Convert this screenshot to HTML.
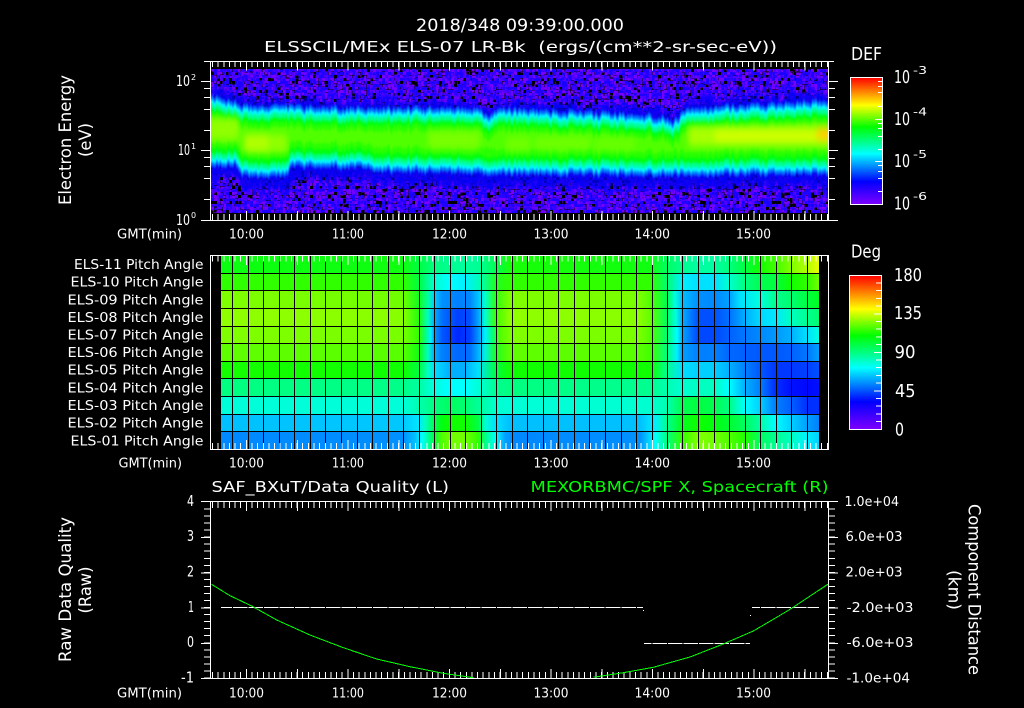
<!DOCTYPE html>
<html lang="en"><head><meta charset="utf-8"><title>ELS plot</title>
<style>
html,body{margin:0;padding:0;background:#000;width:1024px;height:708px;overflow:hidden}
svg{display:block}
text{font-family:"DejaVu Sans","Liberation Sans",sans-serif;font-size:13.5px;fill:#fff;white-space:pre}
.t{font-size:16.5px}.m{font-size:15.5px}.b{font-size:18px}.sm{font-size:8px}.su{font-size:11px}.d{font-size:15px}
.k{stroke:#fff;fill:none;shape-rendering:crispEdges}
</style></head><body>
<svg xmlns="http://www.w3.org/2000/svg" width="1024" height="708" viewBox="0 0 1024 708">
<defs>
<clipPath id="c1"><rect x="211" y="69" width="617" height="145"/></clipPath>
<filter id="spT" filterUnits="userSpaceOnUse" x="211" y="69" width="618" height="145" color-interpolation-filters="sRGB">
<feTurbulence type="fractalNoise" baseFrequency=".83" numOctaves="2" seed="3" result="n"/>
<feFlood x="212" y="70" width="1" height="1" flood-color="#fff"/><feComposite width="3" height="3"/><feTile result="a"/>
<feComposite in="n" in2="a" operator="in"/><feMorphology operator="dilate" radius="1"/>
<feColorMatrix values="3 0 0 0 -1 3 0 0 0 -1 3 0 0 0 -1 0 0 0 0 1"/>
<feComponentTransfer><feFuncR type="discrete" tableValues="0 0 0 0 0 0 0 .46 .46 .46 .46 .46 .46 .3 .3 .3 .3 .2 .2 .2"/><feFuncG type="discrete" tableValues="0"/><feFuncB type="discrete" tableValues="0 0 0 0 0 0 0 1 1 1 1 1 1 1 1 1 1 1 1 1"/></feComponentTransfer>
</filter>
<filter id="spB" filterUnits="userSpaceOnUse" x="211" y="69" width="618" height="145" color-interpolation-filters="sRGB">
<feTurbulence type="fractalNoise" baseFrequency=".79" numOctaves="2" seed="11" result="n"/>
<feFlood x="212" y="70" width="1" height="1" flood-color="#fff"/><feComposite width="3" height="3"/><feTile result="a"/>
<feComposite in="n" in2="a" operator="in"/><feMorphology operator="dilate" radius="1"/>
<feColorMatrix values="3 0 0 0 -1 3 0 0 0 -1 3 0 0 0 -1 0 0 0 0 1"/>
<feComponentTransfer><feFuncR type="discrete" tableValues="0 0 0 0 0 .46 .46 .46 .46 .46 .3 .3 .3 .2 .2 .1 .1 .1 .1 .1"/><feFuncG type="discrete" tableValues="0"/><feFuncB type="discrete" tableValues="0 0 0 0 0 1 1 1 1 1 1 1 1 1 1 1 1 1 1 1"/></feComponentTransfer>
</filter>
<filter id="band" filterUnits="userSpaceOnUse" x="190" y="60" width="660" height="160" color-interpolation-filters="sRGB">
<feTurbulence type="fractalNoise" baseFrequency=".45 .004" numOctaves="1" seed="5"/>
<feColorMatrix result="d" values="2 0 0 0 -.5 0 0 0 0 .5 0 0 0 0 0 0 0 0 0 1"/>
<feDisplacementMap in="SourceGraphic" in2="d" scale="6" xChannelSelector="G" yChannelSelector="R"/>
<feGaussianBlur stdDeviation=".5 1.4"/>
</filter>
<filter id="soft" filterUnits="userSpaceOnUse" x="190" y="60" width="660" height="160" color-interpolation-filters="sRGB">
<feTurbulence type="fractalNoise" baseFrequency=".45 .004" numOctaves="1" seed="8"/>
<feColorMatrix result="d" values="2 0 0 0 -.5 0 0 0 0 .5 0 0 0 0 0 0 0 0 0 1"/>
<feDisplacementMap in="SourceGraphic" in2="d" scale="12" xChannelSelector="G" yChannelSelector="R"/>
<feGaussianBlur stdDeviation=".7 2.5"/>
</filter>
<filter id="core" filterUnits="userSpaceOnUse" x="190" y="60" width="660" height="160" color-interpolation-filters="sRGB">
<feGaussianBlur stdDeviation="3 4"/>
</filter>
<linearGradient id="cb" x1="0" y1="0" x2="0" y2="1">
<stop offset="0" stop-color="#ff0000"/><stop offset=".218" stop-color="#ffff00"/><stop offset=".39" stop-color="#00ff00"/><stop offset=".5" stop-color="#00ff80"/><stop offset=".6" stop-color="#00ffff"/><stop offset=".71" stop-color="#0080ff"/><stop offset=".82" stop-color="#0000ff"/><stop offset="1" stop-color="#7f00ff"/>
</linearGradient>
<linearGradient id="r11" gradientUnits="userSpaceOnUse" x1="0" y1="0" x2="1000" y2="0">
<stop offset=".221" stop-color="#0cff10"/><stop offset=".403" stop-color="#10ff10"/><stop offset=".419" stop-color="#00ff40"/><stop offset=".434" stop-color="#00ff80"/><stop offset=".450" stop-color="#00ff90"/><stop offset=".465" stop-color="#00ffa0"/><stop offset=".481" stop-color="#00ff90"/><stop offset=".496" stop-color="#00ff50"/><stop offset=".510" stop-color="#18ff08"/><stop offset=".651" stop-color="#10ff10"/><stop offset=".667" stop-color="#00ff60"/><stop offset=".682" stop-color="#00ff90"/><stop offset=".698" stop-color="#00ffa0"/><stop offset=".714" stop-color="#00ffa0"/><stop offset=".729" stop-color="#00ff80"/><stop offset=".745" stop-color="#00ff40"/><stop offset=".760" stop-color="#10ff00"/><stop offset=".775" stop-color="#40ff00"/><stop offset=".791" stop-color="#80ff00"/><stop offset=".807" stop-color="#b0ff00"/><stop offset=".819" stop-color="#e8ff00"/>
</linearGradient>
<linearGradient id="r10" gradientUnits="userSpaceOnUse" x1="0" y1="0" x2="1000" y2="0">
<stop offset=".221" stop-color="#30ff00"/><stop offset=".403" stop-color="#30ff00"/><stop offset=".419" stop-color="#00ff40"/><stop offset=".434" stop-color="#00ffd0"/><stop offset=".450" stop-color="#00ffff"/><stop offset=".465" stop-color="#00f0ff"/><stop offset=".481" stop-color="#00ffb0"/><stop offset=".496" stop-color="#20ff20"/><stop offset=".510" stop-color="#30ff00"/><stop offset=".651" stop-color="#30ff00"/><stop offset=".667" stop-color="#00ff70"/><stop offset=".682" stop-color="#00f0ff"/><stop offset=".698" stop-color="#00e0ff"/><stop offset=".714" stop-color="#00e0ff"/><stop offset=".729" stop-color="#00ffd0"/><stop offset=".745" stop-color="#00ff80"/><stop offset=".760" stop-color="#00ff50"/><stop offset=".775" stop-color="#00ff40"/><stop offset=".791" stop-color="#10ff00"/><stop offset=".807" stop-color="#30ff00"/><stop offset=".819" stop-color="#70ff00"/>
</linearGradient>
<linearGradient id="r9" gradientUnits="userSpaceOnUse" x1="0" y1="0" x2="1000" y2="0">
<stop offset=".221" stop-color="#80ff00"/><stop offset=".403" stop-color="#70ff00"/><stop offset=".419" stop-color="#10ff20"/><stop offset=".428" stop-color="#00ffa0"/><stop offset=".434" stop-color="#00d0ff"/><stop offset=".442" stop-color="#0090ff"/><stop offset=".458" stop-color="#0080ff"/><stop offset=".470" stop-color="#0088ff"/><stop offset=".478" stop-color="#00c0ff"/><stop offset=".485" stop-color="#00ffd0"/><stop offset=".496" stop-color="#30ff10"/><stop offset=".510" stop-color="#80ff00"/><stop offset=".640" stop-color="#78ff00"/><stop offset=".651" stop-color="#50ff00"/><stop offset=".667" stop-color="#00ff50"/><stop offset=".675" stop-color="#00ffe0"/><stop offset=".682" stop-color="#00c0ff"/><stop offset=".698" stop-color="#0090ff"/><stop offset=".714" stop-color="#0088ff"/><stop offset=".729" stop-color="#00a0ff"/><stop offset=".740" stop-color="#00e0ff"/><stop offset=".760" stop-color="#00ffe0"/><stop offset=".775" stop-color="#00ff90"/><stop offset=".791" stop-color="#00ff70"/><stop offset=".807" stop-color="#00ff40"/><stop offset=".819" stop-color="#00ff20"/>
</linearGradient>
<linearGradient id="r8" gradientUnits="userSpaceOnUse" x1="0" y1="0" x2="1000" y2="0">
<stop offset=".221" stop-color="#90ff00"/><stop offset=".403" stop-color="#88ff00"/><stop offset=".419" stop-color="#20ff10"/><stop offset=".428" stop-color="#00ffc0"/><stop offset=".434" stop-color="#00b0ff"/><stop offset=".442" stop-color="#0070ff"/><stop offset=".458" stop-color="#0040ff"/><stop offset=".470" stop-color="#0050ff"/><stop offset=".478" stop-color="#00a0ff"/><stop offset=".485" stop-color="#00ffd0"/><stop offset=".496" stop-color="#40ff00"/><stop offset=".510" stop-color="#90ff00"/><stop offset=".640" stop-color="#88ff00"/><stop offset=".651" stop-color="#60ff00"/><stop offset=".667" stop-color="#00ff60"/><stop offset=".676" stop-color="#00ffe0"/><stop offset=".682" stop-color="#00b0ff"/><stop offset=".698" stop-color="#0050ff"/><stop offset=".714" stop-color="#0050ff"/><stop offset=".729" stop-color="#0070ff"/><stop offset=".745" stop-color="#00b0ff"/><stop offset=".760" stop-color="#00d8ff"/><stop offset=".775" stop-color="#00e8ff"/><stop offset=".791" stop-color="#00ffc0"/><stop offset=".807" stop-color="#00ff90"/><stop offset=".819" stop-color="#00ff70"/>
</linearGradient>
<linearGradient id="r7" gradientUnits="userSpaceOnUse" x1="0" y1="0" x2="1000" y2="0">
<stop offset=".221" stop-color="#80ff00"/><stop offset=".403" stop-color="#78ff00"/><stop offset=".419" stop-color="#30ff00"/><stop offset=".426" stop-color="#00ff90"/><stop offset=".431" stop-color="#00f0ff"/><stop offset=".434" stop-color="#00a0ff"/><stop offset=".442" stop-color="#0058ff"/><stop offset=".458" stop-color="#0028ff"/><stop offset=".470" stop-color="#0040ff"/><stop offset=".478" stop-color="#0090ff"/><stop offset=".485" stop-color="#00f0ff"/><stop offset=".492" stop-color="#00ff80"/><stop offset=".500" stop-color="#50ff00"/><stop offset=".512" stop-color="#80ff00"/><stop offset=".640" stop-color="#78ff00"/><stop offset=".651" stop-color="#50ff00"/><stop offset=".667" stop-color="#00ff70"/><stop offset=".677" stop-color="#00ffff"/><stop offset=".683" stop-color="#00a0ff"/><stop offset=".698" stop-color="#0048ff"/><stop offset=".714" stop-color="#0048ff"/><stop offset=".729" stop-color="#0060ff"/><stop offset=".745" stop-color="#0078ff"/><stop offset=".760" stop-color="#0088ff"/><stop offset=".775" stop-color="#0098ff"/><stop offset=".791" stop-color="#00b0ff"/><stop offset=".807" stop-color="#00e0ff"/><stop offset=".819" stop-color="#00ffe0"/>
</linearGradient>
<linearGradient id="r6" gradientUnits="userSpaceOnUse" x1="0" y1="0" x2="1000" y2="0">
<stop offset=".221" stop-color="#60ff00"/><stop offset=".403" stop-color="#58ff00"/><stop offset=".419" stop-color="#10ff10"/><stop offset=".428" stop-color="#00ffc0"/><stop offset=".434" stop-color="#00b0ff"/><stop offset=".442" stop-color="#0080ff"/><stop offset=".458" stop-color="#0068ff"/><stop offset=".470" stop-color="#0070ff"/><stop offset=".478" stop-color="#00b0ff"/><stop offset=".485" stop-color="#00f0e0"/><stop offset=".496" stop-color="#20ff20"/><stop offset=".510" stop-color="#60ff00"/><stop offset=".640" stop-color="#58ff00"/><stop offset=".651" stop-color="#40ff00"/><stop offset=".667" stop-color="#00ff80"/><stop offset=".677" stop-color="#00f0ff"/><stop offset=".682" stop-color="#00a0ff"/><stop offset=".698" stop-color="#0080ff"/><stop offset=".714" stop-color="#0080ff"/><stop offset=".729" stop-color="#0068ff"/><stop offset=".745" stop-color="#0060ff"/><stop offset=".760" stop-color="#0058ff"/><stop offset=".775" stop-color="#0058ff"/><stop offset=".791" stop-color="#0060ff"/><stop offset=".807" stop-color="#0078ff"/><stop offset=".819" stop-color="#00a0ff"/>
</linearGradient>
<linearGradient id="r5" gradientUnits="userSpaceOnUse" x1="0" y1="0" x2="1000" y2="0">
<stop offset=".221" stop-color="#14ff00"/><stop offset=".403" stop-color="#10ff00"/><stop offset=".419" stop-color="#00ff40"/><stop offset=".428" stop-color="#00ffc0"/><stop offset=".434" stop-color="#00e0ff"/><stop offset=".450" stop-color="#00b0ff"/><stop offset=".465" stop-color="#00b0ff"/><stop offset=".478" stop-color="#00e0ff"/><stop offset=".496" stop-color="#00ff40"/><stop offset=".510" stop-color="#10ff00"/><stop offset=".651" stop-color="#10ff00"/><stop offset=".667" stop-color="#00ff90"/><stop offset=".682" stop-color="#00e0ff"/><stop offset=".698" stop-color="#00d0ff"/><stop offset=".714" stop-color="#00d0ff"/><stop offset=".729" stop-color="#00b0ff"/><stop offset=".745" stop-color="#0080ff"/><stop offset=".760" stop-color="#0058ff"/><stop offset=".775" stop-color="#0038ff"/><stop offset=".791" stop-color="#0038ff"/><stop offset=".807" stop-color="#0040ff"/><stop offset=".819" stop-color="#0050ff"/>
</linearGradient>
<linearGradient id="r4" gradientUnits="userSpaceOnUse" x1="0" y1="0" x2="1000" y2="0">
<stop offset=".221" stop-color="#00ff80"/><stop offset=".403" stop-color="#00ff88"/><stop offset=".419" stop-color="#00ffa0"/><stop offset=".434" stop-color="#00ffe0"/><stop offset=".450" stop-color="#00ffff"/><stop offset=".465" stop-color="#00ffff"/><stop offset=".481" stop-color="#00ffd0"/><stop offset=".496" stop-color="#00ff90"/><stop offset=".510" stop-color="#00ff80"/><stop offset=".651" stop-color="#00ff90"/><stop offset=".667" stop-color="#00ffb0"/><stop offset=".682" stop-color="#00ffd0"/><stop offset=".698" stop-color="#00ffc0"/><stop offset=".714" stop-color="#00ffc0"/><stop offset=".729" stop-color="#00ffff"/><stop offset=".745" stop-color="#00b0ff"/><stop offset=".760" stop-color="#0080ff"/><stop offset=".775" stop-color="#0030ff"/><stop offset=".791" stop-color="#0010ff"/><stop offset=".807" stop-color="#0008ff"/><stop offset=".819" stop-color="#0010ff"/>
</linearGradient>
<linearGradient id="r3" gradientUnits="userSpaceOnUse" x1="0" y1="0" x2="1000" y2="0">
<stop offset=".221" stop-color="#00ffd8"/><stop offset=".403" stop-color="#00ffd8"/><stop offset=".419" stop-color="#00ffb0"/><stop offset=".434" stop-color="#00ff80"/><stop offset=".450" stop-color="#00ff60"/><stop offset=".465" stop-color="#00ff70"/><stop offset=".481" stop-color="#00ffa0"/><stop offset=".496" stop-color="#00ffd0"/><stop offset=".510" stop-color="#00ffd8"/><stop offset=".651" stop-color="#00ffd0"/><stop offset=".667" stop-color="#00ffb0"/><stop offset=".682" stop-color="#00ff50"/><stop offset=".698" stop-color="#00ff40"/><stop offset=".714" stop-color="#00ff50"/><stop offset=".729" stop-color="#00ff80"/><stop offset=".745" stop-color="#00ffff"/><stop offset=".760" stop-color="#00d0ff"/><stop offset=".775" stop-color="#0080ff"/><stop offset=".791" stop-color="#0060ff"/><stop offset=".807" stop-color="#0030ff"/><stop offset=".819" stop-color="#0030ff"/>
</linearGradient>
<linearGradient id="r2" gradientUnits="userSpaceOnUse" x1="0" y1="0" x2="1000" y2="0">
<stop offset=".221" stop-color="#00c0ff"/><stop offset=".403" stop-color="#00c8ff"/><stop offset=".419" stop-color="#00e8ff"/><stop offset=".425" stop-color="#00ffc0"/><stop offset=".434" stop-color="#00ff50"/><stop offset=".442" stop-color="#00ff10"/><stop offset=".450" stop-color="#10ff00"/><stop offset=".465" stop-color="#10ff00"/><stop offset=".478" stop-color="#00ff40"/><stop offset=".485" stop-color="#00ffd0"/><stop offset=".496" stop-color="#00e0ff"/><stop offset=".510" stop-color="#00c0ff"/><stop offset=".640" stop-color="#00c0ff"/><stop offset=".655" stop-color="#00f0ff"/><stop offset=".667" stop-color="#00ff90"/><stop offset=".682" stop-color="#00ff20"/><stop offset=".698" stop-color="#10ff00"/><stop offset=".714" stop-color="#00ff10"/><stop offset=".729" stop-color="#00ff30"/><stop offset=".745" stop-color="#00ff60"/><stop offset=".760" stop-color="#00ffa0"/><stop offset=".775" stop-color="#00ffff"/><stop offset=".791" stop-color="#00d0ff"/><stop offset=".807" stop-color="#00a0ff"/><stop offset=".819" stop-color="#0080ff"/>
</linearGradient>
<linearGradient id="r1" gradientUnits="userSpaceOnUse" x1="0" y1="0" x2="1000" y2="0">
<stop offset=".221" stop-color="#0088ff"/><stop offset=".403" stop-color="#0090ff"/><stop offset=".415" stop-color="#00c0ff"/><stop offset=".422" stop-color="#00ffff"/><stop offset=".430" stop-color="#00ff80"/><stop offset=".434" stop-color="#00ff40"/><stop offset=".442" stop-color="#50ff00"/><stop offset=".450" stop-color="#70ff00"/><stop offset=".465" stop-color="#70ff00"/><stop offset=".478" stop-color="#30ff00"/><stop offset=".485" stop-color="#00ff80"/><stop offset=".496" stop-color="#00ffff"/><stop offset=".505" stop-color="#00a0ff"/><stop offset=".515" stop-color="#0088ff"/><stop offset=".640" stop-color="#0090ff"/><stop offset=".655" stop-color="#00ffff"/><stop offset=".667" stop-color="#00ff80"/><stop offset=".682" stop-color="#30ff00"/><stop offset=".698" stop-color="#80ff00"/><stop offset=".714" stop-color="#70ff00"/><stop offset=".729" stop-color="#50ff00"/><stop offset=".745" stop-color="#20ff00"/><stop offset=".760" stop-color="#00ff60"/><stop offset=".775" stop-color="#00ff90"/><stop offset=".791" stop-color="#00ffc0"/><stop offset=".807" stop-color="#00f0ff"/><stop offset=".819" stop-color="#00d0ff"/>
</linearGradient>
</defs>

<rect width="1024" height="708" fill="#000"/>

<!-- titles -->
<text class="t" x="416" y="31" textLength="208" lengthAdjust="spacingAndGlyphs">2018/348 09:39:00.000</text>
<text class="m" x="264" y="52" textLength="513" lengthAdjust="spacingAndGlyphs">ELSSCIL/MEx ELS-07 LR-Bk  (ergs/(cm**2-sr-sec-eV))</text>

<!-- panel 1 heatmap -->
<g clip-path="url(#c1)">
<rect x="211" y="69" width="617" height="70" fill="#000" filter="url(#spT)"/>
<rect x="211" y="139" width="617" height="75" fill="#000" filter="url(#spB)"/>
<g filter="url(#soft)" opacity=".82">
<polygon fill="#0000f0" points="200,85 236,96 243,99 286,99 292,100 368,101 374,101 478,102 488,108 498,102 640,108 668,111 673,116 686,101 760,98 840,93 840,187 760,187 686,188 673,188 668,188 640,188 498,187 488,187 478,186 374,184 368,180 292,180 286,190 243,189 236,179 200,179"/>
</g>
<g filter="url(#band)">
<polygon fill="#0070ff" points="200,92 236,103 243,106 286,106 292,107 368,108 374,108 478,109 488,115 498,109 640,115 668,118 673,123 686,108 760,105 840,100 840,174 760,174 686,175 673,175 668,175 640,175 498,174 488,174 478,173 374,171 368,167 292,167 286,177 243,176 236,166 200,166"/>
<polygon fill="#00f8ff" points="200,96 236,107 243,110 286,110 292,111 368,112 374,112 478,113 488,119 498,113 640,119 668,122 673,127 686,112 760,109 840,104 840,170 760,170 686,171 673,171 668,171 640,171 498,170 488,170 478,169 374,167 368,163 292,163 286,173 243,172 236,162 200,162"/>
<polygon fill="#00ff90" points="200,100 236,111 243,114 286,114 292,115 368,116 374,116 478,117 488,123 498,117 640,123 668,126 673,131 686,116 760,113 840,108 840,166 760,166 686,167 673,167 668,167 640,167 498,166 488,166 478,165 374,163 368,159 292,159 286,169 243,168 236,158 200,158"/>
<polygon fill="#00ff10" points="200,105 236,116 243,119 286,119 292,120 368,121 374,121 478,122 488,128 498,122 640,128 668,131 673,136 686,121 760,118 840,113 840,161 760,161 686,162 673,162 668,162 640,162 498,161 488,161 478,160 374,158 368,154 292,154 286,164 243,163 236,153 200,153"/>
<polygon fill="#28ff00" points="200,109 236,120 243,123 286,123 292,124 368,125 374,125 478,126 488,132 498,126 640,132 668,135 673,140 686,125 760,122 840,117 840,156 760,156 686,157 673,157 668,157 640,157 498,156 488,156 478,155 374,153 368,149 292,149 286,159 243,158 236,148 200,148"/>
<polygon fill="#50ff00" points="200,114 236,125 243,128 286,128 292,129 368,130 374,131 478,131 488,139 498,131 640,137 668,140 673,147 686,130 760,127 840,122 840,150 760,150 686,151 673,150 668,151 640,151 498,150 488,146 478,149 374,147 368,143 292,143 286,153 243,152 236,142 200,142"/>
</g>
<g filter="url(#core)">
<rect x="195" y="118" width="44" height="22" fill="#90ff00"/>
<rect x="244" y="134" width="24" height="18" fill="#b0ff00"/>
<rect x="268" y="134" width="19" height="18" fill="#90ff00"/>
<rect x="428" y="131" width="52" height="18" fill="#78ff00"/>
<rect x="506" y="137" width="24" height="14" fill="#70ff00"/>
<rect x="535" y="137" width="55" height="12" fill="#70ff00"/>
<rect x="595" y="138" width="40" height="12" fill="#68ff00"/>
<rect x="688" y="126" width="160" height="20" fill="#a8ff00"/>
<rect x="715" y="130" width="130" height="12" fill="#d0ff00"/>
<rect x="817" y="128" width="20" height="12" fill="#ffd000"/>
</g>
</g>

<!-- panel 2 heatmap -->
<rect x="221" y="256" width="598" height="18" fill="url(#r11)"/>
<rect x="221" y="273" width="598" height="18" fill="url(#r10)"/>
<rect x="221" y="290" width="598" height="19" fill="url(#r9)"/>
<rect x="221" y="308" width="598" height="19" fill="url(#r8)"/>
<rect x="221" y="326" width="598" height="18" fill="url(#r7)"/>
<rect x="221" y="343" width="598" height="19" fill="url(#r6)"/>
<rect x="221" y="361" width="598" height="18" fill="url(#r5)"/>
<rect x="221" y="378" width="598" height="19" fill="url(#r4)"/>
<rect x="221" y="396" width="598" height="19" fill="url(#r3)"/>
<rect x="221" y="414" width="598" height="18" fill="url(#r2)"/>
<rect x="221" y="431" width="598" height="18" fill="url(#r1)"/>
<path shape-rendering="crispEdges" stroke="#000" fill="none" d="M221 273.5H819M221 290.5H819M221 308.5H819M221 326.5H819M221 343.5H819M221 361.5H819M221 378.5H819M221 396.5H819M221 414.5H819M221 431.5H819M232.5 256V449M248.5 256V449M263.5 256V449M279.5 256V449M294.5 256V449M310.5 256V449M325.5 256V449M341.5 256V449M357.5 256V449M372.5 256V449M388.5 256V449M403.5 256V449M419.5 256V449M434.5 256V449M450.5 256V449M465.5 256V449M481.5 256V449M496.5 256V449M512.5 256V449M527.5 256V449M543.5 256V449M558.5 256V449M574.5 256V449M589.5 256V449M605.5 256V449M621.5 256V449M636.5 256V449M652.5 256V449M667.5 256V449M682.5 256V449M698.5 256V449M714.5 256V449M729.5 256V449M745.5 256V449M760.5 256V449M776.5 256V449M791.5 256V449M807.5 256V449"/>

<!-- panel 1 axes -->
<g class="k">
<path d="M204 61.5H834M201 220.5H838M210.5 61V221M828.5 61V221"/>
<path d="M201 81.5H211M204 88.5H211M204 97.5H211M204 109.5H211M204 130.5H211M201 150.5H211M204 157.5H211M204 166.5H211M204 178.5H211M204 199.5H211"/>
<path d="M828 81.5H838M828 88.5H835M828 97.5H835M828 109.5H835M828 130.5H835M828 150.5H838M828 158.5H835M828 166.5H835M828 178.5H835M828 199.5H835"/>
<line x1="212" y1="64.5" x2="828" y2="64.5" stroke-width="5" stroke-dasharray="1 4.64"/>
<line x1="246" y1="66" x2="828" y2="66" stroke-width="9" stroke-dasharray="1 49.76"/>
<line x1="212" y1="217" x2="828" y2="217" stroke-width="6" stroke-dasharray="1 4.64"/>
<line x1="246" y1="215.5" x2="828" y2="215.5" stroke-width="9" stroke-dasharray="1 49.76"/>
</g>

<!-- panel 2 axes -->
<g class="k">
<rect x="210.5" y="255.5" width="618" height="194"/>
<line x1="212" y1="258.5" x2="828" y2="258.5" stroke-width="6" stroke-dasharray="1 4.64"/>
<line x1="246" y1="260.5" x2="828" y2="260.5" stroke-width="9" stroke-dasharray="1 49.76"/>
<line x1="212" y1="446" x2="828" y2="446" stroke-width="6" stroke-dasharray="1 4.64"/>
<line x1="246" y1="444.5" x2="828" y2="444.5" stroke-width="9" stroke-dasharray="1 49.76"/>
</g>

<!-- panel 3 axes -->
<g class="k">
<path d="M201 501.5H838M201 678.5H838M210.5 501V679M828.5 501V679"/>
<line x1="212" y1="505" x2="828" y2="505" stroke-width="6" stroke-dasharray="1 4.64"/>
<line x1="246" y1="506.5" x2="828" y2="506.5" stroke-width="9" stroke-dasharray="1 49.76"/>
<line x1="212" y1="675" x2="828" y2="675" stroke-width="6" stroke-dasharray="1 4.64"/>
<line x1="246" y1="673.5" x2="828" y2="673.5" stroke-width="9" stroke-dasharray="1 49.76"/>
<line x1="207.5" y1="508.5" x2="207.5" y2="678" stroke-width="7" stroke-dasharray="1 6.04"/>
<line x1="206" y1="537" x2="206" y2="678" stroke-width="10" stroke-dasharray="1 34.3"/>
<line x1="831.5" y1="508.5" x2="831.5" y2="678" stroke-width="7" stroke-dasharray="1 6.04"/>
<line x1="833" y1="537" x2="833" y2="678" stroke-width="10" stroke-dasharray="1 34.3"/>
</g>

<!-- panel 3 data -->
<g fill="none" stroke="#fff" shape-rendering="crispEdges">
<line x1="221" y1="607.5" x2="643" y2="607.5" stroke-dasharray="14.53 1" stroke-dashoffset="3.53"/>
<line x1="644" y1="643.5" x2="750" y2="643.5" stroke-dasharray="14.53 1" stroke-dashoffset="7.23"/>
<line x1="752" y1="607.5" x2="819" y2="607.5" stroke-dasharray="14.53 1" stroke-dashoffset="6.53"/>
<path d="M643 610.5h1M750 615.5h1"/>
</g>
<g fill="none" stroke="#00ff00" stroke-width="1" shape-rendering="crispEdges">
<polyline points="211.5,584.3 230,595.7 251.7,606 276.7,620 310,635 343.3,647.7 376.7,659 410,666.7 443.3,673.3 473.3,677.7"/>
<polyline points="593.3,677.3 623.3,672.7 653.3,667.3 690,657 723.3,644 753.3,631 776.7,617.3 793.3,607.3 806.7,598.3 828.3,584"/>
</g>

<!-- colour bars -->
<rect x="850.5" y="77.5" width="32" height="127" fill="url(#cb)" stroke="#fff" shape-rendering="crispEdges"/>
<path class="k" d="M878 81.5H882M878 86.5H882M878 92.5H882M878 106.5H882M875 119.5H882M878 123.5H882M878 128.5H882M878 136.5H882M878 149.5H882M875 161.5H882M878 165.5H882M878 171.5H882M878 178.5H882M878 191.5H882"/>
<rect x="849.5" y="275.5" width="32" height="154" fill="url(#cb)" stroke="#fff" shape-rendering="crispEdges"/>
<line class="k" x1="878.5" y1="282.5" x2="878.5" y2="425" stroke-width="5" stroke-dasharray="1 6.7"/>
<line class="k" x1="877.5" y1="313.5" x2="877.5" y2="392" stroke-width="7" stroke-dasharray="1 37.6"/>

<!-- panel 1 labels -->
<text transform="translate(71,205) rotate(-90)" class="t" textLength="130" lengthAdjust="spacingAndGlyphs">Electron Energy</text>
<text transform="translate(91,157) rotate(-90)" class="t" textLength="34" lengthAdjust="spacingAndGlyphs">(eV)</text>
<text class="d" x="176" y="86" textLength="14" lengthAdjust="spacingAndGlyphs">10</text><text class="sm" x="191" y="80">2</text>
<text class="d" x="178" y="155" textLength="12" lengthAdjust="spacingAndGlyphs">10</text><text class="sm" x="191" y="149">1</text>
<text class="d" x="176" y="225" textLength="14" lengthAdjust="spacingAndGlyphs">10</text><text class="sm" x="191" y="218">0</text>

<text x="117" y="238.5" textLength="65" lengthAdjust="spacingAndGlyphs">GMT(min)</text>
<text x="229" y="238.5" textLength="35" lengthAdjust="spacingAndGlyphs">10:00</text>
<text x="332" y="238.5" textLength="32" lengthAdjust="spacingAndGlyphs">11:00</text>
<text x="432" y="238.5" textLength="35" lengthAdjust="spacingAndGlyphs">12:00</text>
<text x="533.5" y="238.5" textLength="35" lengthAdjust="spacingAndGlyphs">13:00</text>
<text x="634.5" y="238.5" textLength="35.5" lengthAdjust="spacingAndGlyphs">14:00</text>
<text x="736" y="238.5" textLength="35" lengthAdjust="spacingAndGlyphs">15:00</text>

<!-- colour bar labels -->
<text class="b" x="851" y="60" textLength="31" lengthAdjust="spacingAndGlyphs">DEF</text>
<text class="b" x="894" y="83" textLength="16" lengthAdjust="spacingAndGlyphs">10</text><text class="su" x="913" y="74" textLength="14" lengthAdjust="spacingAndGlyphs">-3</text>
<text class="b" x="894" y="125" textLength="16" lengthAdjust="spacingAndGlyphs">10</text><text class="su" x="913" y="115.5" textLength="14" lengthAdjust="spacingAndGlyphs">-4</text>
<text class="b" x="894" y="167" textLength="16" lengthAdjust="spacingAndGlyphs">10</text><text class="su" x="913" y="158" textLength="14" lengthAdjust="spacingAndGlyphs">-5</text>
<text class="b" x="894" y="209.5" textLength="16" lengthAdjust="spacingAndGlyphs">10</text><text class="su" x="913" y="200" textLength="14" lengthAdjust="spacingAndGlyphs">-6</text>

<text class="b" x="851" y="257.5" textLength="30" lengthAdjust="spacingAndGlyphs">Deg</text>
<text class="b" x="894" y="281" textLength="28" lengthAdjust="spacingAndGlyphs">180</text>
<text class="b" x="894" y="319" textLength="28" lengthAdjust="spacingAndGlyphs">135</text>
<text class="b" x="894.5" y="358" textLength="21" lengthAdjust="spacingAndGlyphs">90</text>
<text class="b" x="895" y="397" textLength="20.5" lengthAdjust="spacingAndGlyphs">45</text>
<text class="b" x="895" y="435.5" textLength="9" lengthAdjust="spacingAndGlyphs">0</text>

<!-- panel 2 labels -->
<text x="74" y="269" textLength="129.5" lengthAdjust="spacingAndGlyphs">ELS-11 Pitch Angle</text>
<text x="70.5" y="286.5" textLength="133" lengthAdjust="spacingAndGlyphs">ELS-10 Pitch Angle</text>
<text x="67.5" y="304.5" textLength="136" lengthAdjust="spacingAndGlyphs">ELS-09 Pitch Angle</text>
<text x="67.5" y="322" textLength="136" lengthAdjust="spacingAndGlyphs">ELS-08 Pitch Angle</text>
<text x="67.5" y="339.5" textLength="136" lengthAdjust="spacingAndGlyphs">ELS-07 Pitch Angle</text>
<text x="67.5" y="357" textLength="136" lengthAdjust="spacingAndGlyphs">ELS-06 Pitch Angle</text>
<text x="67.5" y="374.5" textLength="136" lengthAdjust="spacingAndGlyphs">ELS-05 Pitch Angle</text>
<text x="67.5" y="392.5" textLength="136" lengthAdjust="spacingAndGlyphs">ELS-04 Pitch Angle</text>
<text x="67.5" y="410" textLength="136" lengthAdjust="spacingAndGlyphs">ELS-03 Pitch Angle</text>
<text x="67.5" y="427.5" textLength="136" lengthAdjust="spacingAndGlyphs">ELS-02 Pitch Angle</text>
<text x="70.5" y="445.5" textLength="133" lengthAdjust="spacingAndGlyphs">ELS-01 Pitch Angle</text>

<text x="118.5" y="467.5" textLength="63.5" lengthAdjust="spacingAndGlyphs">GMT(min)</text>
<text x="229" y="467.5" textLength="35" lengthAdjust="spacingAndGlyphs">10:00</text>
<text x="332" y="467.5" textLength="32" lengthAdjust="spacingAndGlyphs">11:00</text>
<text x="432" y="467.5" textLength="35" lengthAdjust="spacingAndGlyphs">12:00</text>
<text x="533.5" y="467.5" textLength="35" lengthAdjust="spacingAndGlyphs">13:00</text>
<text x="634.5" y="467.5" textLength="35.5" lengthAdjust="spacingAndGlyphs">14:00</text>
<text x="736" y="467.5" textLength="35" lengthAdjust="spacingAndGlyphs">15:00</text>

<!-- panel 3 labels -->
<text class="m" x="211.5" y="492" textLength="237.5" lengthAdjust="spacingAndGlyphs">SAF_BXuT/Data Quality (L)</text>
<text class="m" x="530.5" y="492" textLength="298" lengthAdjust="spacingAndGlyphs" style="fill:#00ff00">MEXORBMC/SPF X, Spacecraft (R)</text>

<text class="d" x="187" y="506" textLength="7" lengthAdjust="spacingAndGlyphs">4</text>
<text class="d" x="187" y="541" textLength="7" lengthAdjust="spacingAndGlyphs">3</text>
<text class="d" x="187" y="576.5" textLength="7" lengthAdjust="spacingAndGlyphs">2</text>
<text class="d" x="188" y="612" textLength="6" lengthAdjust="spacingAndGlyphs">1</text>
<text class="d" x="187" y="647" textLength="7" lengthAdjust="spacingAndGlyphs">0</text>
<text class="d" x="181" y="682.5" textLength="13" lengthAdjust="spacingAndGlyphs">-1</text>

<text transform="translate(71,662) rotate(-90)" class="t" textLength="145" lengthAdjust="spacingAndGlyphs">Raw Data Quality</text>
<text transform="translate(91,613.5) rotate(-90)" class="t" textLength="47" lengthAdjust="spacingAndGlyphs">(Raw)</text>

<text x="844.5" y="506" textLength="54.5" lengthAdjust="spacingAndGlyphs">1.0e+04</text>
<text x="845.5" y="541" textLength="57" lengthAdjust="spacingAndGlyphs">6.0e+03</text>
<text x="845.5" y="576.5" textLength="57" lengthAdjust="spacingAndGlyphs">2.0e+03</text>
<text x="846.5" y="612" textLength="67" lengthAdjust="spacingAndGlyphs">-2.0e+03</text>
<text x="846.5" y="647" textLength="67" lengthAdjust="spacingAndGlyphs">-6.0e+03</text>
<text x="846.5" y="682.5" textLength="63.5" lengthAdjust="spacingAndGlyphs">-1.0e+04</text>

<text transform="translate(968.5,504) rotate(90)" class="t" textLength="171" lengthAdjust="spacingAndGlyphs">Component Distance</text>
<text transform="translate(948.5,570) rotate(90)" class="t" textLength="40" lengthAdjust="spacingAndGlyphs">(km)</text>

<text x="117" y="697.5" textLength="65" lengthAdjust="spacingAndGlyphs">GMT(min)</text>
<text x="229" y="697.5" textLength="35" lengthAdjust="spacingAndGlyphs">10:00</text>
<text x="332" y="697.5" textLength="32" lengthAdjust="spacingAndGlyphs">11:00</text>
<text x="432" y="697.5" textLength="35" lengthAdjust="spacingAndGlyphs">12:00</text>
<text x="533.5" y="697.5" textLength="35" lengthAdjust="spacingAndGlyphs">13:00</text>
<text x="634.5" y="697.5" textLength="35.5" lengthAdjust="spacingAndGlyphs">14:00</text>
<text x="736" y="697.5" textLength="35" lengthAdjust="spacingAndGlyphs">15:00</text>
</svg>
</body></html>
